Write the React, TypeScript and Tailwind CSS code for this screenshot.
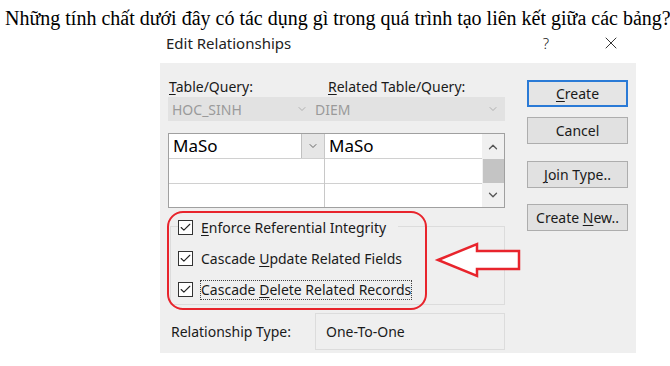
import { Check, ChevronDown, ChevronUp, X } from "lucide-react";

const ui = { fontFamily: '"Noto Sans", "Liberation Sans", sans-serif' };

// label with one underlined access key (u < 0 => none)
const Key = ({ label, u }: { label: string; u: number }) =>
  u < 0 ? (
    <span>{label}</span>
  ) : (
    <span>
      {label.slice(0, u)}
      <span className="underline underline-offset-2">{label[u]}</span>
      {label.slice(u + 1)}
    </span>
  );

const Btn = ({ label, u, primary }: { label: string; u: number; primary?: boolean }) => (
  <div
    className={`flex h-[27px] w-[101px] items-center justify-center border text-[14px] text-[#1a1a1a] ${
      primary ? "border-2 border-[#2a7ad6] bg-[#e5e5e5]" : "border-[#adadad] bg-[#e1e1e1]"
    }`}
  >
    <Key label={label} u={u} />
  </div>
);

const Box = ({ label, u, focus }: { label: string; u: number; focus?: boolean }) => (
  <div className="flex h-[31px] items-center">
    <div className="flex items-center gap-[8px] bg-[#efefef] py-[2px] pr-[12px]">
      <div className="flex h-[15px] w-[15px] items-center justify-center border border-[#333] bg-white">
        <Check size={13} strokeWidth={2} className="text-[#222]" />
      </div>
      <span
        className={`text-[14px] leading-[18px] text-[#1a1a1a] ${
          focus ? "outline outline-1 outline-dotted outline-[#444]" : ""
        }`}
      >
        <Key label={label} u={u} />
      </span>
    </div>
  </div>
);

export default function App() {
  return (
    <div className="relative h-[366px] w-[670px] overflow-hidden bg-white">
      <p
        className="whitespace-nowrap pl-[5px] pt-[7px] text-[20px] leading-[22px] text-black"
        style={{ fontFamily: '"Liberation Serif", "DejaVu Serif", serif' }}
      >
        Những tính chất dưới đây có tác dụng gì trong quá trình tạo liên kết giữa các bảng?
      </p>

      <div className="ml-[160px] w-[476px]" style={ui}>
        {/* title bar */}
        <div className="flex h-[34px] items-center pb-[6px] pl-[6px] pr-[15px] text-[#222]">
          <span className="text-[15px]">Edit Relationships</span>
          <span className="ml-auto mr-[52px] text-[15px] font-light">?</span>
          <X size={20} strokeWidth={1.1} />
        </div>

        {/* body */}
        <div className="flex h-[290px] bg-[#efefef] pl-[8px] pt-[13px]">
          <div className="flex w-[337px] flex-col">
            <div className="flex h-[20px] items-center text-[14px] text-[#1a1a1a]">
              <span className="w-[160px] pl-[1px]">
                <Key label="Table/Query:" u={0} />
              </span>
              <Key label="Related Table/Query:" u={0} />
            </div>
            <div className="mt-[1px] flex h-[24px] items-center bg-[#e2e2e2] text-[14px] text-[#9a9a9a]">
              <span className="pl-[4px]">HOC_SINH</span>
              <ChevronDown size={12} className="ml-auto mr-[5px] text-[#b0b0b0]" />
              <span className="w-[174px] pl-[2px]">DIEM</span>
              <ChevronDown size={12} className="mr-[6px] text-[#b0b0b0]" />
            </div>

            <div className="mt-[12px] flex h-[75px] border border-[#a0a0a0] bg-white">
              <div className="flex w-[156px] flex-col border-r border-[#c8c8c8]">
                <div className="flex h-[25px] items-center border-b border-[#d0d0d0]">
                  <span className="pl-[4px] text-[17px] text-black">MaSo</span>
                  <div className="ml-auto flex h-[24px] w-[23px] items-center justify-center border-l border-[#c0c0c0] bg-[#e6e6e6]">
                    <ChevronDown size={12} className="text-[#666]" />
                  </div>
                </div>
                <div className="h-[25px] border-b border-[#d0d0d0]" />
              </div>
              <div className="flex flex-1 flex-col">
                <div className="flex h-[25px] items-center border-b border-[#d0d0d0] pl-[4px] text-[17px] text-black">
                  MaSo
                </div>
                <div className="h-[25px] border-b border-[#d0d0d0]" />
              </div>
              <div className="flex w-[22px] flex-col items-center bg-[#f0f0f0]">
                <ChevronUp size={14} strokeWidth={2.2} className="mt-[6px] text-[#555]" />
                <div className="mt-[5px] h-[24px] w-[21px] bg-[#c4c4c4]" />
                <ChevronDown size={14} strokeWidth={2.2} className="mt-[5px] text-[#555]" />
              </div>
            </div>

            <div className="relative mt-[4px] flex h-[93px]">
              <div className="absolute bottom-[0px] left-[2px] right-0 top-[14px] border border-[#dcdcdc]" />
              <div className="relative flex flex-col pl-[10px]">
                <Box label="Enforce Referential Integrity" u={0} />
                <Box label="Cascade Update Related Fields" u={8} />
                <Box label="Cascade Delete Related Records" u={8} focus />
              </div>
            </div>

            <div className="mt-[8px] flex h-[37px] items-center text-[14px] text-[#1a1a1a]">
              <span className="w-[147px] pl-[3px]">Relationship Type:</span>
              <div className="flex h-full flex-1 items-center border border-[#dcdcdc] pl-[10px]">One-To-One</div>
            </div>
          </div>

          <div className="ml-[22px] flex flex-col pt-[4px]">
            <Btn label="Create" u={0} primary />
            <div className="mt-[10px]" />
            <Btn label="Cancel" u={-1} />
            <div className="mt-[17px]" />
            <Btn label="Join Type.." u={0} />
            <div className="mt-[16px]" />
            <Btn label="Create New.." u={7} />
          </div>
        </div>
      </div>

      {/* annotation: red rounded frame + arrow */}
      <div className="absolute left-[167px] top-[211px] h-[99px] w-[260px] rounded-[16px] border-2 border-[#e8242c]" />
      <svg className="absolute left-[434px] top-[240px]" width="90" height="40" viewBox="0 0 90 40">
        <path
          d="M4 20 L43 4 L43 11 L85 11 L85 29 L43 29 L43 36 Z"
          fill="white"
          stroke="#e8242c"
          strokeWidth="2.5"
          strokeLinejoin="miter"
        />
      </svg>
    </div>
  );
}
